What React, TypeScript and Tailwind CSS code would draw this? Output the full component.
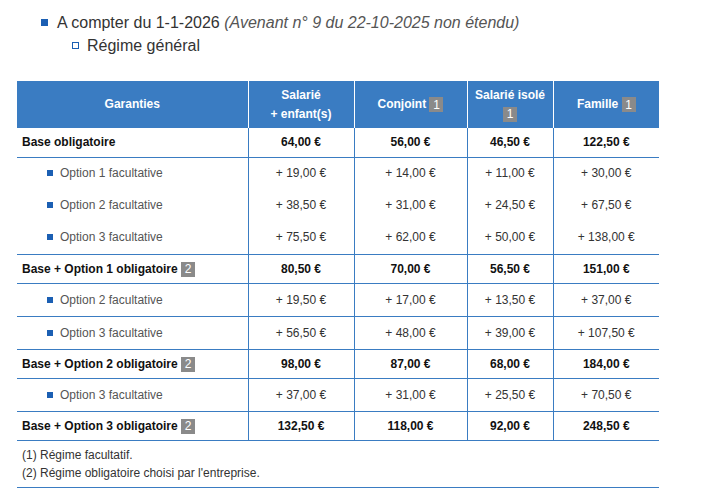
const cols = ["Salarié + enfant(s)", "Conjoint", "Salarié isolé", "Famille"];

type Row = {
  label: string;
  kind: "base" | "option";
  note?: string;
  values: string[];
  line?: boolean;
};

const rows: Row[] = [
  { label: "Base obligatoire", kind: "base", values: ["64,00 €", "56,00 €", "46,50 €", "122,50 €"], line: true },
  { label: "Option 1 facultative", kind: "option", values: ["+ 19,00 €", "+ 14,00 €", "+ 11,00 €", "+ 30,00 €"] },
  { label: "Option 2 facultative", kind: "option", values: ["+ 38,50 €", "+ 31,00 €", "+ 24,50 €", "+ 67,50 €"] },
  { label: "Option 3 facultative", kind: "option", values: ["+ 75,50 €", "+ 62,00 €", "+ 50,00 €", "+ 138,00 €"], line: true },
  { label: "Base + Option 1 obligatoire", kind: "base", note: "2", values: ["80,50 €", "70,00 €", "56,50 €", "151,00 €"], line: true },
  { label: "Option 2 facultative", kind: "option", values: ["+ 19,50 €", "+ 17,00 €", "+ 13,50 €", "+ 37,00 €"], line: true },
  { label: "Option 3 facultative", kind: "option", values: ["+ 56,50 €", "+ 48,00 €", "+ 39,00 €", "+ 107,50 €"], line: true },
  { label: "Base + Option 2 obligatoire", kind: "base", note: "2", values: ["98,00 €", "87,00 €", "68,00 €", "184,00 €"], line: true },
  { label: "Option 3 facultative", kind: "option", values: ["+ 37,00 €", "+ 31,00 €", "+ 25,50 €", "+ 70,50 €"], line: true },
  { label: "Base + Option 3 obligatoire", kind: "base", note: "2", values: ["132,50 €", "118,00 €", "92,00 €", "248,50 €"], line: true },
];

const Note = ({ n }: { n: string }) => (
  <span className="inline-flex h-[15px] w-[14px] items-center justify-center bg-[#8a8a8a] align-middle text-[12px] font-normal leading-none text-white">
    {n}
  </span>
);

const App = () => {
  return (
    <div className="min-h-[494px] bg-white pt-[11px] font-['Liberation_Sans',Arial,sans-serif] text-[#333]">
      <div className="pl-[41px] text-[16px] leading-[23px]">
        <div className="flex items-center">
          <span className="mr-[9px] h-[7px] w-[7px] bg-[#1b5fb3]" />
          <span>
            A compter du 1-1-2026 <i className="text-[#555]">(Avenant n° 9 du 22-10-2025 non étendu)</i>
          </span>
        </div>
        <div className="flex items-center pl-[31px]">
          <span className="mr-[8px] h-[7px] w-[7px] border border-[#1b5fb3]" />
          <span>Régime général</span>
        </div>
      </div>

      <table className="ml-[17px] mt-[24px] w-[642px] table-fixed border-collapse text-[12px]">
        <colgroup>
          <col className="w-[231px]" />
          <col className="w-[106px]" />
          <col className="w-[113px]" />
          <col className="w-[86px]" />
          <col className="w-[106px]" />
        </colgroup>
        <thead>
          <tr className="h-[47px] bg-[#3a7cc2] font-bold leading-[19px] text-white">
            <th className="text-center">Garanties</th>
            <th className="border-l border-white text-center">
              Salarié
              <br />+ enfant(s)
            </th>
            <th className="border-l border-white text-center">
              Conjoint <Note n="1" />
            </th>
            <th className="border-l border-white text-center">
              Salarié isolé
              <br />
              <Note n="1" />
            </th>
            <th className="border-l border-white text-center">
              Famille <Note n="1" />
            </th>
          </tr>
        </thead>
        <tbody>
          {rows.map((r, i) => {
            const base = r.kind === "base";
            const h = base ? "h-[29px]" : i === 1 || i === 2 ? "h-[32px]" : "h-[33px]";
            return (
              <tr key={i} className={`${h} ${r.line ? "border-b border-[#3a7cc2]" : ""}`}>
                <td className={base ? "pl-[5px] font-bold text-[#111]" : "pl-[30px] text-[#555]"}>
                  {base ? (
                    <span>
                      {r.label} {r.note && <Note n={r.note} />}
                    </span>
                  ) : (
                    <span className="flex items-center">
                      <span className="mr-[7px] h-[6px] w-[6px] bg-[#1b5fb3]" />
                      {r.label}
                    </span>
                  )}
                </td>
                {r.values.map((v, j) => (
                  <td
                    key={j}
                    className={`border-l border-[#3a7cc2] text-center ${base ? "font-bold text-[#111]" : "text-[#333]"}`}
                  >
                    {v}
                  </td>
                ))}
              </tr>
            );
          })}
          <tr className="border-b border-[#3a7cc2]">
            <td colSpan={5} className="h-[47px] pl-[5px] leading-[18px] text-[#333]">
              (1) Régime facultatif.
              <br />
              (2) Régime obligatoire choisi par l'entreprise.
            </td>
          </tr>
        </tbody>
      </table>
    </div>
  );
};

export default App;
